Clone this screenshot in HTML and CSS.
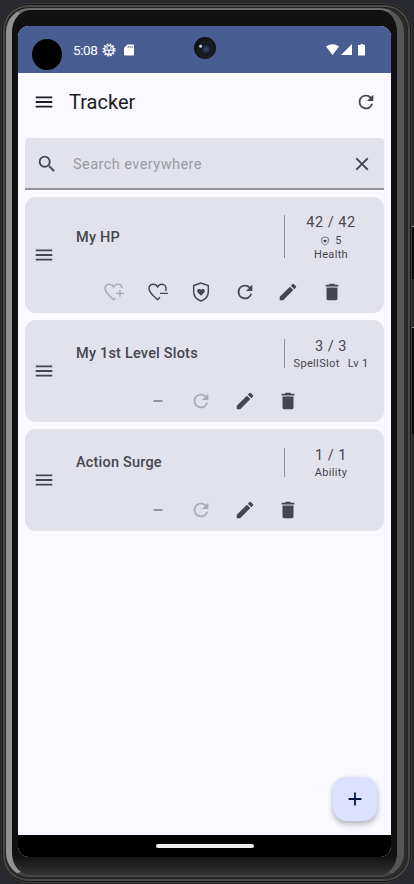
FILE: index.html
```
<!DOCTYPE html>
<html lang="en">
<head>
<meta charset="utf-8">
<title>Tracker</title>
<link rel="stylesheet" href="styles.css">
</head>
<body>
<svg width="0" height="0" class="defs">
  <symbol id="menu" viewBox="0 0 24 24"><path d="M3 18h18v-2H3v2zm0-5h18v-2H3v2zm0-7v2h18V6H3z"/></symbol>
  <symbol id="refresh" viewBox="0 0 24 24"><path d="M17.65 6.35A7.96 7.96 0 0 0 12 4a8 8 0 1 0 7.73 10h-2.08A6 6 0 1 1 12 6c1.66 0 3.14.69 4.22 1.78L13 11h7V4l-2.35 2.35z"/></symbol>
  <symbol id="search" viewBox="0 0 24 24"><path d="M15.5 14h-.79l-.28-.27A6.47 6.47 0 0 0 16 9.5 6.5 6.5 0 1 0 9.5 16c1.61 0 3.09-.59 4.23-1.57l.27.28v.79l5 4.99L20.49 19l-4.99-5zm-6 0a4.5 4.5 0 1 1 0-9 4.5 4.5 0 0 1 0 9z"/></symbol>
  <symbol id="close" viewBox="0 0 24 24"><path d="M19 6.41 17.59 5 12 10.59 6.41 5 5 6.41 10.59 12 5 17.59 6.41 19 12 13.41 17.59 19 19 17.59 13.41 12z"/></symbol>
  <symbol id="edit" viewBox="0 0 24 24"><path d="M3 17.25V21h3.75L17.81 9.94l-3.75-3.75L3 17.25zM20.71 7.04a1 1 0 0 0 0-1.41l-2.34-2.34a1 1 0 0 0-1.41 0l-1.83 1.83 3.75 3.75 1.83-1.83z"/></symbol>
  <symbol id="delete" viewBox="0 0 24 24"><path d="M6 19c0 1.1.9 2 2 2h8c1.1 0 2-.9 2-2V7H6v12zM19 4h-3.5l-1-1h-5l-1 1H5v2h14V4z"/></symbol>
  <symbol id="add" viewBox="0 0 24 24"><path d="M19 13h-6v6h-2v-6H5v-2h6V5h2v6h6v2z"/></symbol>
  <symbol id="minus" viewBox="0 0 22 22"><path d="M6.5 10.500h9v1h-9z"/></symbol>
  <symbol id="heart-plus" viewBox="0 0 24 24"><path class="line" d="M13.400 18.600 11.500 20.400C5.300 14.800 2.200 11.800 2.200 8.100 2.200 5.400 4.200 3.500 6.800 3.500c1.900 0 3.600 1 4.700 2.900 1.100-1.900 2.800-2.900 4.700-2.900 2.400 0 4.300 1.700 4.600 4.400M18.500 9.700v7.600M14.200 13.500h8.600"/></symbol>
  <symbol id="heart-minus" viewBox="0 0 24 24"><path class="line" d="M14.200 17.900 11.500 20.400C5.300 14.800 2.200 11.800 2.200 8.100 2.200 5.400 4.200 3.500 6.800 3.500c1.900 0 3.600 1 4.700 2.900 1.100-1.900 2.800-2.900 4.700-2.900 2.700 0 4.600 2.200 4.600 5 0 .8-.2 1.600-.6 2.400M14.200 13.500h8.800"/></symbol>
  <symbol id="shield" viewBox="0 0 24 24"><path class="line" d="M12 2.200 4 5v6.500c0 4.800 3.200 8.700 8 10.300 4.800-1.600 8-5.500 8-10.300V5z"/><path d="m12 16-3.300-3.200c-1.900-2-.2-4.500 1.800-4 .7.100 1.200.5 1.500 1 .3-.5.800-.9 1.500-1 2-.5 3.700 2 1.800 4z"/></symbol>
</svg>
<div class="phone">
  <span class="key power"></span>
  <span class="key volume"></span>
  <div class="bezel">
  <div class="screen">
    <header class="status">
      <span class="cutout"></span>
      <time>5:08</time>
      <svg class="gear" viewBox="0 0 14 14"><circle cx="7" cy="7" r="4.500"/><circle class="teeth" cx="7" cy="7" r="5.800"/><path d="M3 7.200h8M7 7v4M5.200 4.200v1.600M8.800 4.200v1.600"/></svg>
      <svg class="sd" viewBox="0 0 10 12"><path d="M3.500.5H9q1 0 1 1v9q0 1-1 1H1q-1 0-1-1V4z"/><path class="slots" d="M4.200 2v2M6.200 2v2M8.200 2v2"/></svg>
      <span class="lens"></span>
      <svg class="signals" viewBox="0 0 40 12"><path d="M0 2.500Q6.500-1.800 13 2.500L6.500 11zM15 11 26 0v11zM34.500 0h3v1H39v10.500h-7V1h2.500z"/></svg>
    </header>
    <div class="appbar">
      <svg class="icon"><use href="#menu"/></svg>
      <h1>Tracker</h1>
      <svg class="icon"><use href="#refresh"/></svg>
    </div>
    <main>
      <div class="search">
        <svg class="icon"><use href="#search"/></svg>
        <span>Search everywhere</span>
        <svg class="icon"><use href="#close"/></svg>
      </div>
      <article class="card tall">
        <svg class="icon handle"><use href="#menu"/></svg>
        <h2>My HP</h2>
        <div class="info"><b>42 / 42</b><span class="temp"><svg class="mini"><use href="#shield"/></svg>5</span><span>Health</span></div>
        <div class="actions">
          <svg class="icon off"><use href="#heart-plus"/></svg>
          <svg class="icon"><use href="#heart-minus"/></svg>
          <svg class="icon"><use href="#shield"/></svg>
          <svg class="icon"><use href="#refresh"/></svg>
          <svg class="icon"><use href="#edit"/></svg>
          <svg class="icon"><use href="#delete"/></svg>
        </div>
      </article>
      <article class="card">
        <svg class="icon handle"><use href="#menu"/></svg>
        <h2>My 1st Level Slots</h2>
        <div class="info"><b>3 / 3</b><span class="pair"><span>SpellSlot</span><span>Lv 1</span></span></div>
        <div class="actions">
          <svg class="icon"><use href="#minus"/></svg>
          <svg class="icon off"><use href="#refresh"/></svg>
          <svg class="icon"><use href="#edit"/></svg>
          <svg class="icon"><use href="#delete"/></svg>
        </div>
      </article>
      <article class="card">
        <svg class="icon handle"><use href="#menu"/></svg>
        <h2>Action Surge</h2>
        <div class="info"><b>1 / 1</b><span class="pair">Ability</span></div>
        <div class="actions">
          <svg class="icon"><use href="#minus"/></svg>
          <svg class="icon off"><use href="#refresh"/></svg>
          <svg class="icon"><use href="#edit"/></svg>
          <svg class="icon"><use href="#delete"/></svg>
        </div>
      </article>
      <div class="fab"><svg class="icon"><use href="#add"/></svg></div>
    </main>
    <footer><span></span></footer>
  </div>
  </div>
</div>
</body>
</html>
```
FILE: styles.css
```
* { box-sizing: border-box; }
body { margin: 0; width: 414px; height: 884px; overflow: hidden; background: #292a30; font-family: Roboto, sans-serif; color: #45464f; display: flow-root; }
.defs { position: absolute; }
svg { display: block; flex: none; fill: currentColor; }
.line { fill: none; stroke: currentColor; stroke-width: 1.6; }
.icon { width: 22px; height: 22px; }
.phone {
  position: relative; margin-top: 2px; width: 413px; height: 882px; padding: 6px 9px 7px 6px; border-radius: 28px;
  background: #2b2b2b;
  box-shadow: inset 0 0 0 1px #242424, inset 0 0 0 2px #3c3c3c, inset 0 0 0 3px #171717, inset 0 0 0 5px #484848, inset 0 0 0 6px #222;
}
.key { position: absolute; right: -1px; width: 2px; background: #090909; border-top: 1px solid #999; }
.power { top: 224px; height: 53px; }
.volume { top: 325px; height: 107px; }
.bezel {
  height: 869px; padding: 16px 6px 16px 6px; border-radius: 24px; border-style: solid;
  border-width: 2px 7px 2px 6px; border-color: #6d6d6a #555 #444 #929292;
  background: linear-gradient(#111 0 845px, #191919 850px, #343434);
}
.screen { width: 373px; height: 831px; border-radius: 11px; overflow: hidden; display: flex; flex-direction: column; background: #f9f9ff; }
.status { height: 47px; flex: none; position: relative; display: flex; align-items: center; background: #485d92; color: #fff; }
.cutout { width: 30px; height: 31px; border-radius: 50%; background: #000; margin: 10px 11px 0 14px; }
time { font-size: 13.5px; line-height: 16px; width: 26px; margin-top: 1px; letter-spacing: -.4px; }
.gear { width: 14px; height: 14px; margin: 0 0 0 3px; fill: none; stroke: #fff; stroke-width: 1.3; }
.teeth { stroke-dasharray: 1.6 1.44; stroke-width: 1.5; }
.sd { width: 10px; height: 12px; margin: 0 0 0 8px; }
.slots { stroke: #485d92; stroke-width: .8; }
.lens { position: absolute; left: 176px; top: 11px; width: 22px; height: 22px; border-radius: 50%; background: radial-gradient(circle at 30% 42%, #c2cede 0 1px, transparent 2px), radial-gradient(circle at 55% 56%, #35425c 0 1px, #101923 5px, #1c1d20 7px, #101112 11px); }
.signals { width: 40px; height: 12px; margin: 0 25px 0 auto; }
.appbar { height: 58px; flex: none; display: flex; align-items: center; padding: 0 14px 0 15px; color: #1a1b21; }
.appbar h1 { flex: 1; margin: 0 0 0 14px; font-size: 20px; line-height: 26px; font-weight: 400; }
.appbar .icon:last-child { color: #45464f; }
main { flex: 1; position: relative; padding: 7px 7px 0; }
.search { height: 52px; display: flex; align-items: center; padding: 2px 11px 0; border-radius: 4px 4px 0 0; background: #e2e2ec; border-bottom: 2px solid #93949f; font-size: 14.5px; letter-spacing: .45px; color: #989aa3; }
.search span { flex: 1; margin-left: 15px; padding-top: 1px; }
.search .icon { color: #45464f; }
.card { height: 102px; margin-top: 7px; border-radius: 11px; background: #e2e2ec; display: grid; grid-template-columns: 51px 208px 100px; grid-template-rows: 19px 29px 1fr; }
.card.tall { height: 116px; grid-template-rows: 18px 43px 1fr; }
.handle { grid-area: 1 / 1 / 4 / 2; align-self: center; margin-left: 7.5px; }
.card h2 { grid-area: 2 / 2; align-self: center; margin: 0; font-size: 14.5px; line-height: 20px; font-weight: 500; letter-spacing: .2px; }
.tall h2 { padding-top: 2px; }
.info { grid-area: 2 / 3; border-left: 1px solid #90909a; padding-right: 7px; display: flex; flex-direction: column; align-items: center; font-size: 11px; line-height: 14px; letter-spacing: .35px; white-space: nowrap; }
.info b { font-size: 14.5px; line-height: 15px; font-weight: 400; letter-spacing: .5px; }
.temp { display: flex; align-items: center; gap: 5px; line-height: 14px; padding-top: 4px; }
.mini { width: 10px; height: 10px; }
.pair { display: flex; gap: 8px; line-height: 20px; }
.actions { grid-area: 3 / 1 / 4 / 4; align-self: end; display: flex; justify-content: center; gap: 21.5px; padding: 0 0 10.5px 37px; }
.off { color: #a9aab3; }
.fab { position: absolute; right: 14px; bottom: 14px; width: 44px; height: 44px; border-radius: 14px; background: #dae2ff; color: #001946; display: grid; place-items: center; box-shadow: 0 4px 6px #0003, 0 1px 5px #0002; }
footer { height: 22px; flex: none; background: #000; display: grid; place-items: center; }
footer span { width: 98px; height: 4px; border-radius: 2px; background: #eee; }
```
